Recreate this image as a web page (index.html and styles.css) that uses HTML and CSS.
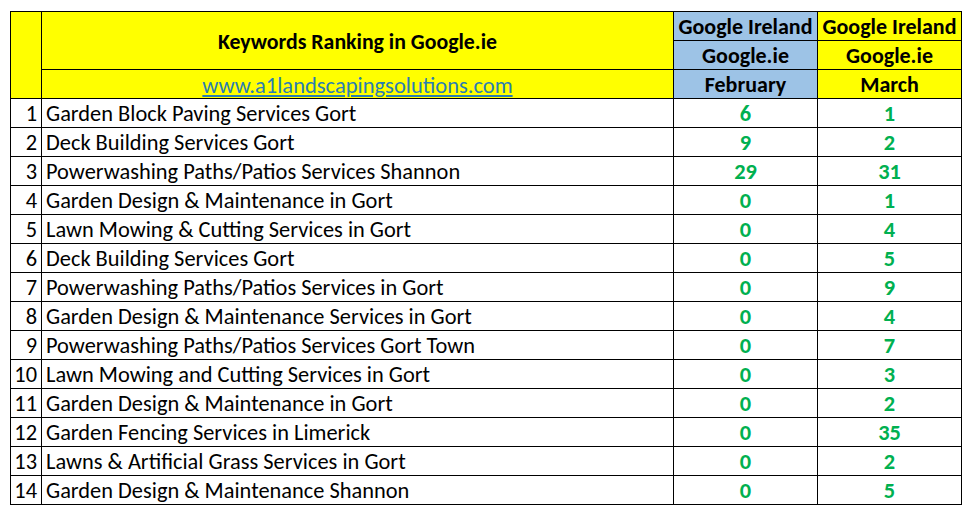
FILE: index.html
```html
<!DOCTYPE html>
<html>
<head>
<meta charset="utf-8">
<link rel="stylesheet" href="styles.css">
</head>
<body>
<table class="rank">
  <colgroup>
    <col class="c-num"><col class="c-kw"><col class="c-feb"><col class="c-mar">
  </colgroup>
  <thead>
    <tr>
      <th class="yellow" rowspan="3"></th>
      <th class="yellow title" rowspan="2">Keywords Ranking in Google.ie</th>
      <th class="blue">Google Ireland</th>
      <th class="yellow">Google Ireland</th>
    </tr>
    <tr>
      <th class="blue">Google.ie</th>
      <th class="yellow">Google.ie</th>
    </tr>
    <tr>
      <th class="yellow link-cell"><a class="link" href="#">www.a1landscapingsolutions.com</a></th>
      <th class="blue">February</th>
      <th class="yellow">March</th>
    </tr>
  </thead>
  <tbody>
    <tr><td class="num">1</td><td class="kw">Garden Block Paving Services Gort</td><td class="val">6</td><td class="val">1</td></tr>
    <tr><td class="num">2</td><td class="kw">Deck Building Services Gort</td><td class="val">9</td><td class="val">2</td></tr>
    <tr><td class="num">3</td><td class="kw">Powerwashing Paths/Patios Services Shannon</td><td class="val">29</td><td class="val">31</td></tr>
    <tr><td class="num">4</td><td class="kw">Garden Design &amp; Maintenance in Gort</td><td class="val">0</td><td class="val">1</td></tr>
    <tr><td class="num">5</td><td class="kw">Lawn Mowing &amp; Cutting Services in Gort</td><td class="val">0</td><td class="val">4</td></tr>
    <tr><td class="num">6</td><td class="kw">Deck Building Services Gort</td><td class="val">0</td><td class="val">5</td></tr>
    <tr><td class="num">7</td><td class="kw">Powerwashing Paths/Patios Services in Gort</td><td class="val">0</td><td class="val">9</td></tr>
    <tr><td class="num">8</td><td class="kw">Garden Design &amp; Maintenance Services in Gort</td><td class="val">0</td><td class="val">4</td></tr>
    <tr><td class="num">9</td><td class="kw">Powerwashing Paths/Patios Services Gort Town</td><td class="val">0</td><td class="val">7</td></tr>
    <tr><td class="num">10</td><td class="kw">Lawn Mowing and Cutting Services in Gort</td><td class="val">0</td><td class="val">3</td></tr>
    <tr><td class="num">11</td><td class="kw">Garden Design &amp; Maintenance in Gort</td><td class="val">0</td><td class="val">2</td></tr>
    <tr><td class="num">12</td><td class="kw">Garden Fencing Services in Limerick</td><td class="val">0</td><td class="val">35</td></tr>
    <tr><td class="num">13</td><td class="kw">Lawns &amp; Artificial Grass Services in Gort</td><td class="val">0</td><td class="val">2</td></tr>
    <tr><td class="num">14</td><td class="kw">Garden Design &amp; Maintenance Shannon</td><td class="val">0</td><td class="val">5</td></tr>
  </tbody>
</table>
</body>
</html>
```
FILE: styles.css
```css
html, body {
  margin: 0;
  padding: 0;
  background: #fff;
}
body {
  padding: 11px 0 0 10px;
  font-family: Carlito, Calibri, Lato, "Open Sans", sans-serif;
  color: #000;
}
.rank {
  border-collapse: collapse;
  table-layout: fixed;
  width: 952px;
}
.c-num { width: 31px; }
.c-kw { width: 632px; }
.c-feb { width: 144px; }
.c-mar { width: 144px; }
.rank th, .rank td {
  border: 1.5px solid #000;
  height: 29px;
  padding: 3px 0 0 0;
  box-sizing: border-box;
  line-height: 1;
  font-size: 22.4px;
}
.rank th {
  font-weight: bold;
  text-align: center;
  font-size: 22px;
  padding-top: 2px;
}
.yellow { background: #ffff00; }
.blue { background: #9dc3e6; }
.rank th.title { font-size: 21.8px; padding-top: 3px; }
.rank th.link-cell { padding-top: 4px; }
.link {
  color: #2a7db3;
  text-decoration: underline;
  font-weight: normal;
  font-size: 22.5px;
}
.rank .num {
  text-align: right;
  padding-right: 4px;
}
.rank .kw {
  text-align: left;
  padding-left: 4px;
}
.val {
  text-align: center;
  color: #00b050;
  font-weight: bold;
}
```
